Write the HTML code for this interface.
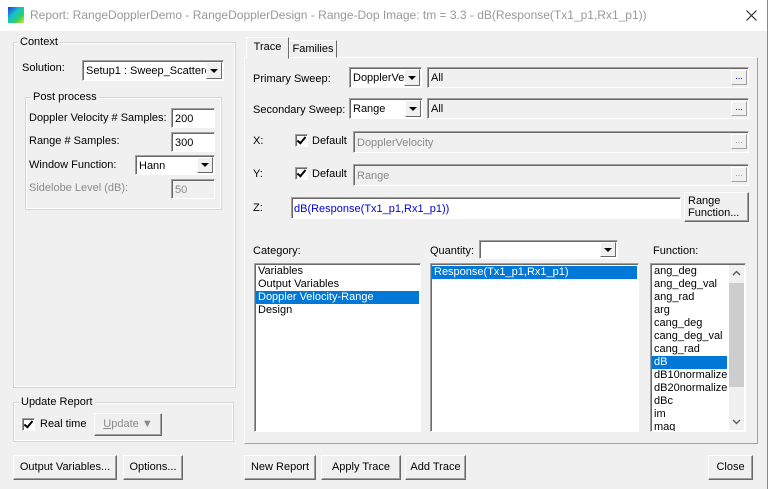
<!DOCTYPE html>
<html><head><style>
*{box-sizing:border-box}
body{margin:0;width:768px;height:489px;background:#f0f0f0;font-family:"Liberation Sans",sans-serif;font-size:11px;color:#000;position:relative;overflow:hidden}
.a{position:absolute}
.t{position:absolute;white-space:nowrap;line-height:13px}
.grp{position:absolute;border:1px solid #d5d5d5;outline:1px solid #fff;outline-offset:-2px}
.lg{position:absolute;background:#f0f0f0;padding:0 2px;line-height:13px;white-space:nowrap}
.in{position:absolute;background:#fff;border:1px solid;border-color:#a0a0a0 #fff #fff #a0a0a0;box-shadow:inset 1px 1px 0 #696969;white-space:nowrap;overflow:hidden}
.c{display:flex;align-items:center;padding-left:3px;padding-top:1px}
.dis{background:#f0f0f0;color:#8a8a8a}
.btn{position:absolute;background:#f0f0f0;border:1px solid;border-color:#fff #696969 #696969 #fff;box-shadow:inset -1px -1px 0 #a0a0a0;text-align:center;white-space:nowrap}
.dd{position:absolute;right:1px;top:1px;bottom:1px;width:16px;background:#f0f0f0;border:1px solid;border-color:#fff #696969 #696969 #fff}
.dd:after{content:"";position:absolute;left:3px;top:50%;margin-top:-2px;border:4px solid transparent;border-top:4px solid #000;border-bottom:0}
.cb{position:absolute;width:13px;height:13px;background:#fff;border:1px solid;border-color:#a0a0a0 #fff #fff #a0a0a0;box-shadow:inset 1px 1px 0 #696969}
.cb:after{content:"";position:absolute;left:3px;top:0px;width:3px;height:7px;border:solid #000;border-width:0 2px 2px 0;transform:rotate(40deg)}
.sel{background:#0078d7;color:#fff}
.eb{position:absolute;right:1px;top:2px;width:16px;height:15px;background:#f0f0f0;border:1px solid;border-color:#fff #a0a0a0 #a0a0a0 #fff;font-size:9px;line-height:10px;text-align:center;color:#0000cc}
</style></head><body>
<div class="a" style="left:0;top:0;width:768px;height:31px;background:#fff"></div>
<div class="a" style="left:8px;top:7px;width:16px;height:16px;background:linear-gradient(135deg,#1b3bd4,#16c0d0 40%,#32d060 70%,#f0e030)"></div>
<div class="t" style="left:30px;top:8px;font-size:12px;line-height:15px;color:#999">Report: RangeDopplerDemo - RangeDopplerDesign - Range-Dop Image: tm = 3.3 - dB(Response(Tx1_p1,Rx1_p1))</div>
<svg class="a" style="left:746px;top:10px" width="11" height="11"><path d="M0.5 0.5L10.5 10.5M10.5 0.5L0.5 10.5" stroke="#222" stroke-width="1.1"/></svg>
<div class="a" style="left:767px;top:0;width:1px;height:489px;background:#888"></div>

<div class="grp" style="left:13px;top:42px;width:223px;height:346px"></div>
<div class="lg" style="left:18px;top:36px">Context</div>
<div class="t" style="left:22px;top:62px">Solution:</div>
<div class="in c" style="left:82px;top:60px;width:142px;height:21px">Setup1 : Sweep_Scattered<div class="dd"></div></div>
<div class="grp" style="left:25px;top:97px;width:197px;height:113px"></div>
<div class="lg" style="left:31px;top:91px">Post process</div>
<div class="t" style="left:29px;top:112px">Doppler Velocity # Samples:</div>
<div class="in c" style="left:171px;top:108px;width:44px;height:20px">200</div>
<div class="t" style="left:29px;top:135px">Range # Samples:</div>
<div class="in c" style="left:171px;top:132px;width:44px;height:20px">300</div>
<div class="t" style="left:29px;top:159px">Window Function:</div>
<div class="in c" style="left:135px;top:155px;width:80px;height:20px">Hann<div class="dd"></div></div>
<div class="t" style="left:29px;top:182px;color:#8a8a8a">Sidelobe Level (dB):</div>
<div class="in c dis" style="left:171px;top:179px;width:44px;height:20px">50</div>

<div class="grp" style="left:13px;top:402px;width:221px;height:40px"></div>
<div class="lg" style="left:19px;top:396px">Update Report</div>
<div class="cb" style="left:22px;top:418px"></div>
<div class="t" style="left:40px;top:418px">Real time</div>
<div class="btn" style="left:94px;top:413px;width:68px;height:23px;line-height:20px;color:#8a8a8a"><u>U</u>pdate &#9660;</div>
<div class="btn" style="left:13px;top:455px;width:104px;height:25px;line-height:22px">Output Variables...</div>
<div class="btn" style="left:123px;top:455px;width:60px;height:25px;line-height:22px">Options...</div>

<div class="a" style="left:244px;top:57px;width:514px;height:387px;border:1px solid;border-color:#fff #a0a0a0 #a0a0a0 #fff"></div>
<div class="a" style="left:246px;top:37px;width:43px;height:22px;background:#f0f0f0;border:1px solid;border-color:#fff #696969 transparent #fff;text-align:center;line-height:18px">Trace</div>
<div class="a" style="left:289px;top:40px;width:48px;height:18px;border:1px solid;border-color:#fff #696969 transparent #fff;text-align:center;line-height:16px">Families</div>

<div class="t" style="left:253px;top:73px">Primary Sweep:</div>
<div class="in c" style="left:349px;top:67px;width:73px;height:21px">DopplerVelocity<div class="dd"></div></div>
<div class="in c" style="left:427px;top:67px;width:322px;height:21px;background:#f0f0f0">All<div class="eb">...</div></div>
<div class="t" style="left:253px;top:104px">Secondary Sweep:</div>
<div class="in c" style="left:349px;top:98px;width:74px;height:21px">Range<div class="dd"></div></div>
<div class="in c" style="left:427px;top:98px;width:322px;height:21px;background:#f0f0f0">All<div class="eb">...</div></div>
<div class="t" style="left:253px;top:135px">X:</div>
<div class="cb" style="left:295px;top:134px"></div>
<div class="t" style="left:312px;top:135px">Default</div>
<div class="in c dis" style="left:353px;top:131px;width:396px;height:22px">DopplerVelocity<div class="eb" style="color:#999">...</div></div>
<div class="t" style="left:253px;top:168px">Y:</div>
<div class="cb" style="left:295px;top:167px"></div>
<div class="t" style="left:312px;top:168px">Default</div>
<div class="in c dis" style="left:353px;top:164px;width:396px;height:22px">Range<div class="eb" style="color:#999">...</div></div>
<div class="t" style="left:253px;top:202px">Z:</div>
<div class="in c" style="left:291px;top:197px;width:390px;height:22px;color:#0000e0;padding-left:2px">dB(Response(Tx1_p1,Rx1_p1))</div>
<div class="btn" style="left:684px;top:192px;width:65px;height:30px;text-align:left;padding-left:3px;line-height:12px;padding-top:2px">Range<br>Function...</div>

<div class="t" style="left:253px;top:245px">Category:</div>
<div class="in" style="left:254px;top:263px;width:167px;height:169px;padding:1px 1px;line-height:13px">
<div style="padding-left:2px">Variables</div><div style="padding-left:2px">Output Variables</div><div class="sel" style="padding-left:2px">Doppler Velocity-Range</div><div style="padding-left:2px">Design</div></div>
<div class="t" style="left:430px;top:245px">Quantity:</div>
<div class="in c" style="left:479px;top:240px;width:139px;height:19px"><div class="dd"></div></div>
<div class="in" style="left:430px;top:263px;width:209px;height:169px;padding:2px 1px;line-height:13px">
<div class="sel" style="padding-left:2px">Response(Tx1_p1,Rx1_p1)</div></div>
<div class="t" style="left:653px;top:245px">Function:</div>
<div class="in" style="left:650px;top:263px;width:96px;height:169px;padding:1px 1px;line-height:13px">
<div style="position:absolute;right:1px;top:1px;width:15px;bottom:1px;background:#f0f0f0"></div>
<div style="position:absolute;right:1px;top:19px;width:15px;height:104px;background:#cdcdcd"></div>
<svg style="position:absolute;right:4px;top:6px" width="9" height="6"><path d="M1 5L4.5 1.5L8 5" stroke="#555" fill="none" stroke-width="1.3"/></svg>
<svg style="position:absolute;right:4px;bottom:6px" width="9" height="6"><path d="M1 1L4.5 4.5L8 1" stroke="#555" fill="none" stroke-width="1.3"/></svg>
<div style="width:75px;padding-left:2px">ang_deg</div><div style="padding-left:2px">ang_deg_val</div><div style="padding-left:2px">ang_rad</div><div style="padding-left:2px">arg</div><div style="padding-left:2px">cang_deg</div><div style="padding-left:2px">cang_deg_val</div><div style="padding-left:2px">cang_rad</div><div class="sel" style="width:75px;padding-left:2px">dB</div><div style="padding-left:2px">dB10normalize</div><div style="padding-left:2px">dB20normalize</div><div style="padding-left:2px">dBc</div><div style="padding-left:2px">im</div><div style="padding-left:2px">mag</div></div>

<div class="btn" style="left:244px;top:455px;width:72px;height:25px;line-height:22px">New Report</div>
<div class="btn" style="left:321px;top:455px;width:80px;height:25px;line-height:22px">Apply Trace</div>
<div class="btn" style="left:405px;top:455px;width:61px;height:25px;line-height:22px">Add Trace</div>
<div class="btn" style="left:708px;top:455px;width:45px;height:25px;line-height:22px">Close</div>
</body></html>
